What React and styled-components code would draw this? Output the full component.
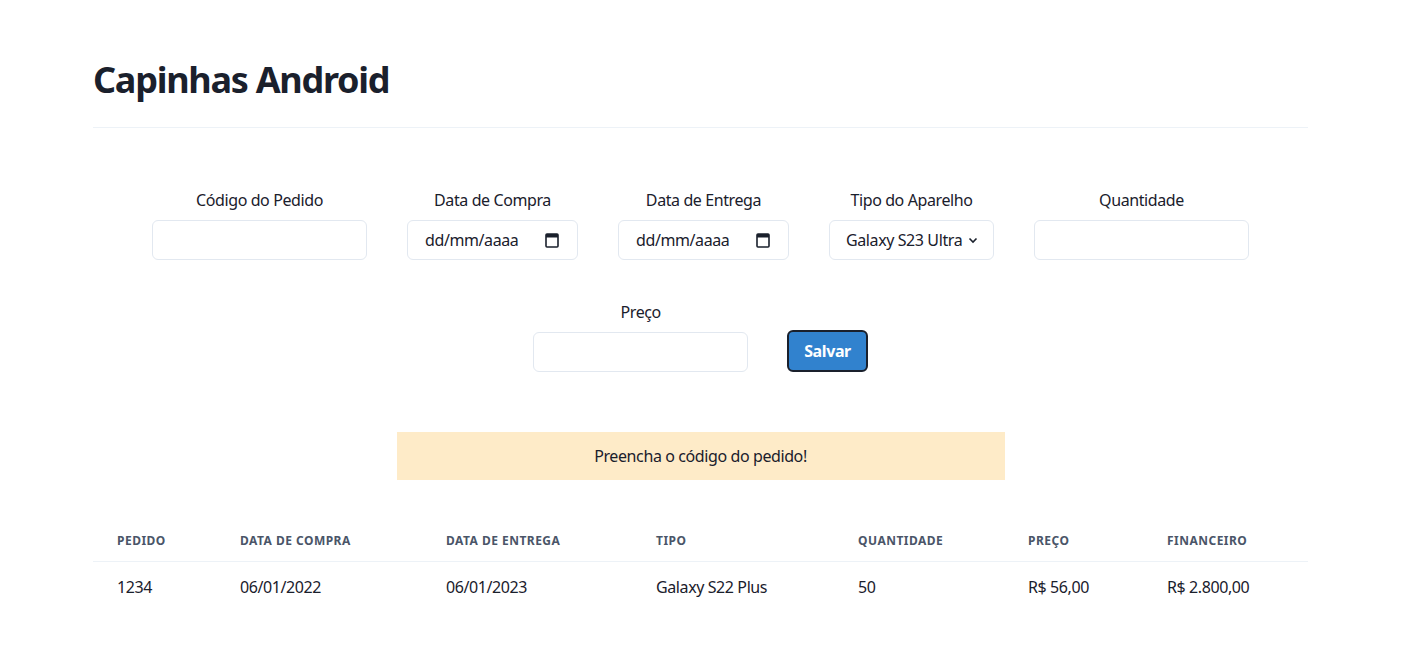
import styled, { createGlobalStyle } from 'styled-components';

const GlobalStyle = createGlobalStyle`
  body {
    margin: 0;
    background: #ffffff;
    color: #1a202c;
    font-family: "Noto Sans", "Open Sans", sans-serif;
    letter-spacing: -0.025em;
  }
`;

const Page = styled.div`
  width: 1215px;
  padding: 58px 0 40px 93px;
`;

const Title = styled.h1`
  margin: 0;
  font-size: 36px;
  line-height: 43px;
  font-weight: 700;
  letter-spacing: -0.035em;
  color: #1a202c;
`;

const Divider = styled.hr`
  margin: 26px 0 60px;
  border: none;
  border-top: 1px solid #edf2f7;
`;

const FormRow = styled.div`
  display: flex;
  justify-content: center;
  align-items: flex-end;
  gap: ${p => p.gap || 40}px;
  margin-bottom: ${p => p.mb || 0}px;
`;

const Field = styled.div`
  display: flex;
  flex-direction: column;
  align-items: center;
  width: ${p => p.width}px;
`;

const Label = styled.label`
  font-size: 16px;
  line-height: 24px;
  margin-bottom: 8px;
  color: #1a202c;
`;

const Box = styled.div`
  box-sizing: border-box;
  width: 100%;
  height: 40px;
  border: 1px solid #e2e8f0;
  border-radius: 6px;
  background: #fff;
  display: flex;
  align-items: center;
  justify-content: space-between;
  padding: 0 ${p => p.pr || 16}px 0 ${p => p.pl || 16}px;
  font-size: 16px;
  white-space: nowrap;
  color: #1a202c;
`;

const Input = styled.input`
  box-sizing: border-box;
  width: 100%;
  height: 40px;
  border: 1px solid #e2e8f0;
  border-radius: 6px;
  padding: 0 16px;
  font-size: 16px;
  font-family: inherit;
  outline: none;
`;

const Button = styled.button`
  box-sizing: border-box;
  height: 42px;
  padding: 0 15px;
  border: 2px solid #1a202c;
  border-radius: 6px;
  background: #3182ce;
  color: #fff;
  font-family: inherit;
  letter-spacing: inherit;
  font-size: 16px;
  font-weight: 700;
  cursor: pointer;
`;

const Alert = styled.div`
  width: 608px;
  margin: 60px auto 40px;
  padding: 12px 16px;
  box-sizing: border-box;
  background: #feebc8;
  text-align: center;
  font-size: 16px;
  line-height: 24px;
  color: #1a202c;
`;

const Table = styled.table`
  width: 100%;
  border-collapse: collapse;
  table-layout: fixed;
`;

const Th = styled.th`
  box-sizing: border-box;
  width: ${p => p.width}px;
  text-align: left;
  padding: 13px 24px 12px;
  font-size: 12px;
  line-height: 16px;
  font-weight: 700;
  letter-spacing: 0.04em;
  text-transform: uppercase;
  color: #4a5568;
  border-bottom: 1px solid #edf2f7;
`;

const Td = styled.td`
  padding: 13px 24px 15px;
  font-size: 16px;
  line-height: 24px;
  color: #1a202c;
`;

const CalendarIcon = () => (
  <svg width="14" height="16" viewBox="0 0 14 16">
    <rect x="1" y="2" width="12" height="13" rx="1" fill="none" stroke="#1a202c" strokeWidth="1.6" />
    <rect x="1" y="2" width="12" height="3.5" fill="#1a202c" />
  </svg>
);

const Chevron = () => (
  <svg width="12" height="12" viewBox="0 0 12 12">
    <path d="M2.5 4.5 L6 8 L9.5 4.5" fill="none" stroke="#1a202c" strokeWidth="1.6" />
  </svg>
);

const columns = [
  ['Pedido', 123],
  ['Data de Compra', 206],
  ['Data de Entrega', 210],
  ['Tipo', 202],
  ['Quantidade', 170],
  ['Preço', 139],
  ['Financeiro', 165],
];

const rows = [
  ['1234', '06/01/2022', '06/01/2023', 'Galaxy S22 Plus', '50', 'R$ 56,00', 'R$ 2.800,00'],
];

export default function App() {
  return (
    <Page>
      <GlobalStyle />
      <Title>Capinhas Android</Title>
      <Divider />

      <FormRow mb={40}>
        <Field width={215}>
          <Label>Código do Pedido</Label>
          <Input type="text" />
        </Field>
        <Field width={171}>
          <Label>Data de Compra</Label>
          <Box pl={17} pr={18}>
            <span>dd/mm/aaaa</span>
            <CalendarIcon />
          </Box>
        </Field>
        <Field width={171}>
          <Label>Data de Entrega</Label>
          <Box pl={17} pr={18}>
            <span>dd/mm/aaaa</span>
            <CalendarIcon />
          </Box>
        </Field>
        <Field width={165}>
          <Label>Tipo do Aparelho</Label>
          <Box pl={16} pr={14}>
            <span>Galaxy S23 Ultra</span>
            <Chevron />
          </Box>
        </Field>
        <Field width={215}>
          <Label>Quantidade</Label>
          <Input type="text" />
        </Field>
      </FormRow>

      <FormRow gap={39}>
        <Field width={215}>
          <Label>Preço</Label>
          <Input type="text" />
        </Field>
        <Button>Salvar</Button>
      </FormRow>

      <Alert>Preencha o código do pedido!</Alert>

      <Table>
        <thead>
          <tr>
            {columns.map(([name, w]) => (
              <Th key={name} width={w}>{name}</Th>
            ))}
          </tr>
        </thead>
        <tbody>
          {rows.map(r => (
            <tr key={r[0]}>
              {r.map((c, i) => (
                <Td key={i}>{c}</Td>
              ))}
            </tr>
          ))}
        </tbody>
      </Table>
    </Page>
  );
}
